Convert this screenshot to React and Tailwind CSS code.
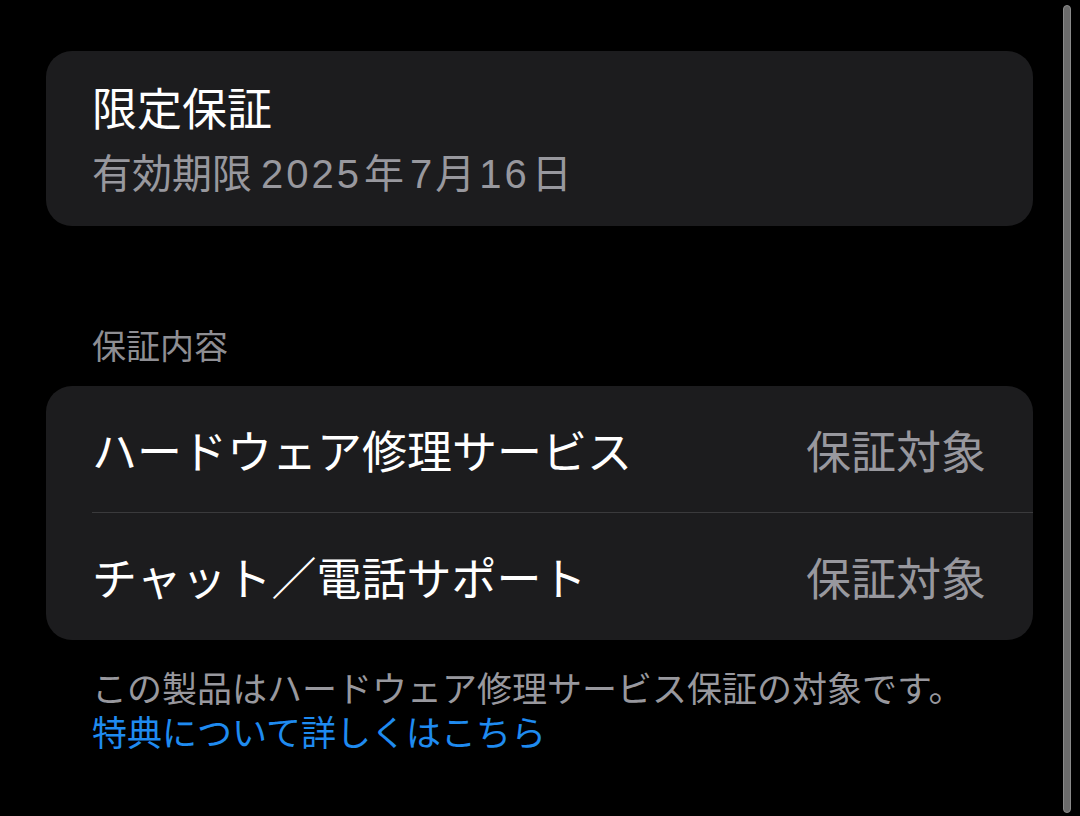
const rows = [
  { label: 'ハードウェア修理サービス', value: '保証対象' },
  { label: 'チャット／電話サポート', value: '保証対象' }
];

function Num({ children }) {
  return (
    <span className="tracking-[3px]" style={{ fontFamily: '"Liberation Sans", Arial, sans-serif' }}>
      {children}
    </span>
  );
}

export default function App() {
  return (
    <div
      className="relative h-[816px] w-[1080px] overflow-hidden bg-black px-[46px] pt-[51px]"
      style={{ fontFamily: '"Noto Sans CJK JP", "Noto Sans", sans-serif' }}
    >
      <section className="h-[175px] w-[987px] rounded-[26px] bg-[#1c1c1e] pl-[46px] pt-[26px]">
        <h1 className="text-[45px] leading-[60px] text-white">限定保証</h1>
        <p className="text-[40px] leading-[68px] text-[#98989e]">
          有効期限 <Num>2025</Num>
          <span className="ml-[2px]">年</span>
          <span className="ml-[6px]"><Num>7</Num></span>月
          <span className="ml-[4px]"><Num>16</Num></span>
          <span className="ml-[2px]">日</span>
        </p>
      </section>

      <h2 className="mt-[99px] mb-[21px] pl-[46px] text-[34px] leading-[40px] text-[#8e8e93]">
        保証内容
      </h2>

      <section className="w-[987px] rounded-[26px] bg-[#1c1c1e] pl-[46px]">
        {rows.map((row, i) => (
          <div
            key={row.label}
            className={
              i < rows.length - 1
                ? 'flex h-[127px] items-center justify-between border-b border-[#3a3a3c] pr-[47px]'
                : 'flex h-[127px] items-center justify-between pr-[47px]'
            }
          >
            <span className="text-[45px] leading-none text-white">{row.label}</span>
            <span className="text-[45px] leading-none text-[#98989e]">{row.value}</span>
          </div>
        ))}
      </section>

      <div className="mt-[25px] pl-[46px] text-[35px] leading-[44px]">
        <p className="text-[#98989e]">この製品はハードウェア修理サービス保証の対象です。</p>
        <a href="#" className="block text-[#1f8bf0]">特典について詳しくはこちら</a>
      </div>

      <div className="absolute left-[1063px] top-[5px] h-[808px] w-[8px] rounded-full border border-[#8a8a8a] bg-[#6b6b6b]" />
    </div>
  );
}
